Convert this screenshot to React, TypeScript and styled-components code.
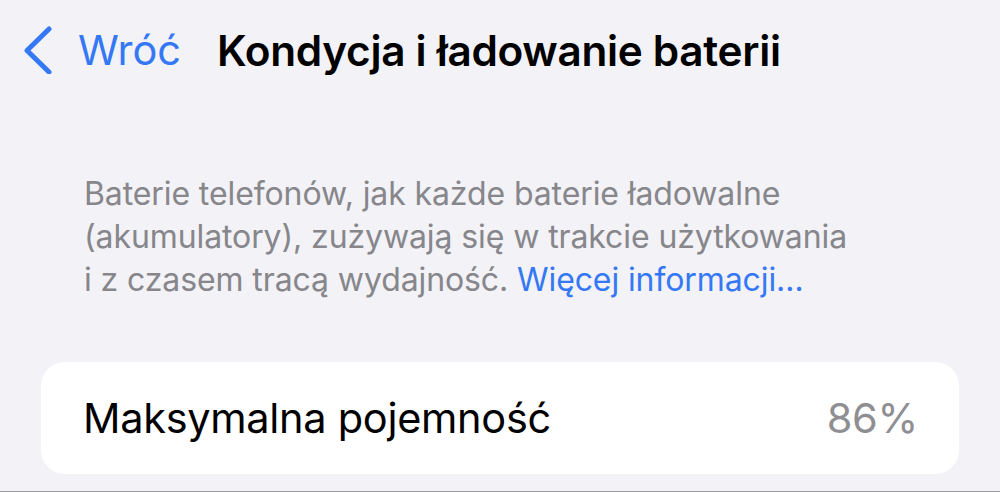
import React from 'react';
import styled, { createGlobalStyle } from 'styled-components';

const GlobalStyle = createGlobalStyle`
  html, body {
    margin: 0;
    padding: 0;
    background: #f2f2f7;
  }
  body {
    font-family: Inter, "Noto Sans", "Liberation Sans", sans-serif;
    -webkit-font-smoothing: antialiased;
  }
`;

const Screen = styled.div`
  width: 1000px;
  height: 492px;
  overflow: hidden;
  background: #f2f2f7;
  display: flex;
  flex-direction: column;
  border-bottom: 1px solid #9c9ca0;
  box-sizing: border-box;
`;

const NavBar = styled.div`
  display: flex;
  align-items: center;
  height: 100px;
  padding-left: 23px;
`;

const BackButton = styled.button`
  display: flex;
  align-items: center;
  gap: 25px;
  border: none;
  background: transparent;
  padding: 0;
  color: #3478f6;
  font-family: inherit;
  font-size: 41.5px;
  font-weight: 400;
  cursor: pointer;
`;

const Title = styled.h1`
  margin: 0 0 0 36px;
  font-size: 42.3px;
  font-weight: 600;
  color: #000;
  letter-spacing: -0.3px;
`;

const Footnote = styled.p`
  margin: 72px 0 0;
  padding: 0 84px;
  font-size: 32px;
  line-height: 43px;
  color: #86868b;
  letter-spacing: -0.1px;
`;

const Link = styled.a`
  color: #3478f6;
  text-decoration: none;
`;

const Card = styled.div`
  margin: 61px 41px 0;
  height: 112px;
  background: #fff;
  border-radius: 24px;
  display: flex;
  align-items: center;
  justify-content: space-between;
  padding: 0 41px 0 42px;
`;

const Label = styled.span<{ $muted?: boolean }>`
  font-size: 41.5px;
  color: ${(p) => (p.$muted ? '#8e8e93' : '#000')};
  letter-spacing: -0.3px;
`;

export default function App() {
  return (
    <>
      <GlobalStyle />
      <Screen>
        <NavBar>
          <BackButton type="button">
            <svg width="30" height="48" viewBox="0 0 30 48" fill="none">
              <path
                d="M26 3 L4 24.5 L26 46"
                stroke="#3478f6"
                strokeWidth="5"
                strokeLinecap="round"
                strokeLinejoin="round"
              />
            </svg>
            Wróć
          </BackButton>
          <Title>Kondycja i ładowanie baterii</Title>
        </NavBar>
        <Footnote>
          Baterie telefonów, jak każde baterie ładowalne
          <br />
          (akumulatory), zużywają się w trakcie użytkowania
          <br />i z czasem tracą wydajność. <Link href="#">Więcej informacji…</Link>
        </Footnote>
        <Card>
          <Label>Maksymalna pojemność</Label>
          <Label $muted>86%</Label>
        </Card>
      </Screen>
    </>
  );
}
